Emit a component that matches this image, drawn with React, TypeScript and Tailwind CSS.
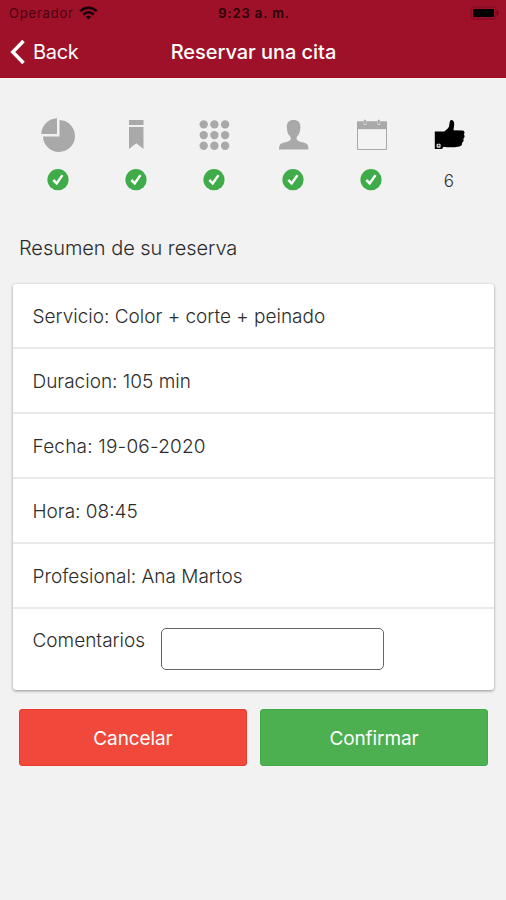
import React from 'react';

const PieIcon = () => (
  <svg width="36" height="36" viewBox="0 0 36 36" fill="#a9a9a9">
    <path d="M17 1.2V17H1.2A16.5 16.5 0 0 1 17 1.2z" />
    <path d="M19.5 3A16 16 0 1 1 3 19.5H19.5z" />
  </svg>
);

const BookmarkIcon = () => (
  <svg width="36" height="36" viewBox="0 0 36 36" fill="#a9a9a9">
    <path d="M11 3h14.500v5H11zM11 10h14.500v22l-7.200-5.700-7.300 5.700z" />
  </svg>
);

const GridIcon = () => (
  <svg width="36" height="36" viewBox="0 0 36 36" fill="#a9a9a9">
    {[7.4, 18.1, 28.8].map((y) =>
      [7.7, 18.4, 29.1].map((x) => <circle key={`${x}-${y}`} cx={x} cy={y} r="4.2" />)
    )}
  </svg>
);

const PersonIcon = () => (
  <svg width="36" height="36" viewBox="0 0 36 36" fill="#a9a9a9">
    <path d="M18.600 3c4.500 0 6.800 2.700 6.800 6.700 0 4.400-1.200 8-3.500 10.100-.8 1.700-.2 3.400 1.500 4.300 2 1 5.500 1.200 7.700 2.500 2 1.200 2.300 3.400 2.300 5.900H4c0-2.500.3-4.700 2.300-5.900 2.200-1.300 5.700-1.500 7.700-2.500 1.700-.9 2.200-2.600 1.400-4.300-2.300-2.100-3.600-5.700-3.600-10.100C11.800 5.700 14.100 3 18.600 3z" />
  </svg>
);

const CalendarIcon = () => (
  <svg width="36" height="36" viewBox="0 0 36 36">
    <path d="M4.500 5H33.500v27.500H4.500z" fill="#f3f3f3" stroke="#a9a9a9" />
    <path d="M4 4.500h30v7.700H4z" fill="#a9a9a9" />
    <path d="M12 3v5M25.800 3v5" stroke="#d4d4d4" strokeWidth="2.800" />
    <path d="M12 2.800v4.200M25.800 2.800v4.200" stroke="#a0a0a0" strokeWidth="1.400" />
  </svg>
);

const ThumbIcon = () => (
  <svg width="36" height="36" viewBox="0 0 36 36">
    <path
      d="M3.800 14.500h9.500c2-1.400 3.700-3 4.600-4.700.7-1.800.4-6.500 2.300-6.700 2.700-.2 3.500 3 2.800 6.300l-.6 3.800 9 .4c2 0 2.800 2.400 1.400 4 1.300 1.300 1 3.300-.5 4.200.8 1.600.2 3.200-1.300 3.900.5 1.900-.6 3.500-2.800 3.800-5.500 1-11.600 1.200-15.600.2l-1.600 2.300H3.800z"
      fill="#000"
    />
    <rect x="5.600" y="26.800" width="4" height="4" rx="1" fill="#ddd" />
    <circle cx="7.600" cy="28.500" r="0.900" fill="#333" />
  </svg>
);

const CheckBadge = () => (
  <svg width="22" height="22" viewBox="0 0 22 22">
    <circle cx="11" cy="10.700" r="10.600" fill="#3fac49" />
    <path d="M6.300 11l3.400 3.400 5.800-8.300" fill="none" stroke="#fff" strokeWidth="2.500" />
  </svg>
);

const steps = [PieIcon, BookmarkIcon, GridIcon, PersonIcon, CalendarIcon, ThumbIcon];

const details = [
  { label: 'Servicio', value: 'Color + corte + peinado' },
  { label: 'Duracion', value: '105 min' },
  { label: 'Fecha', value: '19-06-2020', className: 'tracking-[0.2px]' },
  { label: 'Hora', value: '08:45' },
  { label: 'Profesional', value: 'Ana Martos' },
];

const StatusBar = () => (
  <div className="grid h-[27px] grid-cols-[1fr_auto_1fr] items-center pl-[9px] pr-[7px] text-[13px] text-[#4a0010]">
    <div className="flex items-center gap-[5px] tracking-[0.8px]">
      Operador
      <svg className="-mt-[2px]" width="19" height="14" viewBox="0 0 19 14" fill="none" stroke="#16000a" strokeWidth="2.500">
        <path d="M1.300 5.200c4.700-4.600 11.700-4.600 16.400 0M4.300 8.500c3-3 7.400-3 10.400 0" />
        <path d="M6.900 10.800c1.500-1.300 3.700-1.300 5.200 0l-2.600 2.700z" fill="#16000a" stroke="none" />
      </svg>
    </div>
    <div className="text-center font-semibold tracking-[0.9px] text-[#2a0008]">9:23 a. m.</div>
    <svg className="-mt-px justify-self-end" width="29" height="14" viewBox="0 0 29 14">
      <rect x="1" y="1" width="25" height="12" rx="3" fill="none" stroke="#800b20" />
      <rect x="3" y="3" width="21" height="8" rx="1" fill="#000" />
      <path d="M27.200 4.500c1.800.6 1.800 4.400 0 5z" fill="#60071a" />
    </svg>
  </div>
);

const App = () => {
  return (
    <div className="min-h-[900px] w-full bg-[#f2f2f2] font-['Inter',sans-serif] text-[#2c2c2c]">
      <header className="h-[78px] border-b border-[#a60d1b] bg-[#9e1129]">
        <StatusBar />
        <div className="grid h-[50px] grid-cols-[1fr_auto_1fr] items-center pl-[10px] pr-[9px] text-xl text-white">
          <button className="flex items-center gap-[7px]">
            <svg width="16" height="26" viewBox="0 0 16 26" fill="none" stroke="#fff" strokeWidth="3.500">
              <path d="M13.500 2L2.800 13l10.700 11" />
            </svg>
            <span className="tracking-[-0.3px]">Back</span>
          </button>
          <h1 className="font-medium tracking-[-0.05px]">Reservar una cita</h1>
        </div>
      </header>

      <div className="grid grid-cols-6 pl-[19px] pr-[18px] pt-[39px]">
        {steps.map((Icon, index) => (
          <div key={index} className="flex flex-col items-center gap-4">
            <Icon />
            <div className="flex h-[22px] items-center text-[17px] font-light">
              {index < 5 ? <CheckBadge /> : <span className="pt-[3px]">{index + 1}</span>}
            </div>
          </div>
        ))}
      </div>

      <h2 className="mt-[42px] pl-[19px] text-[20px] font-light leading-[30px] tracking-[-0.05px]">Resumen de su reserva</h2>

      <div className="ml-[13px] mr-3 mt-[21px] rounded-[3px] bg-white shadow-[0_1px_3px_rgba(0,0,0,0.4)]">
        {details.map(({ label, value, className = '' }) => (
          <div key={label} className="flex h-[65px] items-center border-b-2 border-[#e9e9e9] px-[19.5px] pt-1 text-[19px] font-light">
            <p className={className}>{`${label}: ${value}`}</p>
          </div>
        ))}
        <div className="flex h-[81px] items-start gap-4 px-[19.5px] pt-[19px] text-[19px] font-light">
          <label htmlFor="comments" className="leading-[26px]">Comentarios</label>
          <input id="comments" className="h-[42px] w-[223px] rounded-[5px] border border-[#666] bg-white px-2 outline-none" />
        </div>
      </div>

      <div className="mt-[19px] flex gap-[13px] pl-[19px] pr-[18px] text-[19px] text-white">
        <button className="h-[57px] flex-1 rounded-[3px] border border-[#e93a2b] bg-[#f0483a] pt-[3px] tracking-[-0.1px]">Cancelar</button>
        <button className="h-[57px] flex-1 rounded-[3px] border border-[#42aa47] bg-[#4caf50] pt-[3px] tracking-[-0.1px]">Confirmar</button>
      </div>
    </div>
  );
};

export default App;
